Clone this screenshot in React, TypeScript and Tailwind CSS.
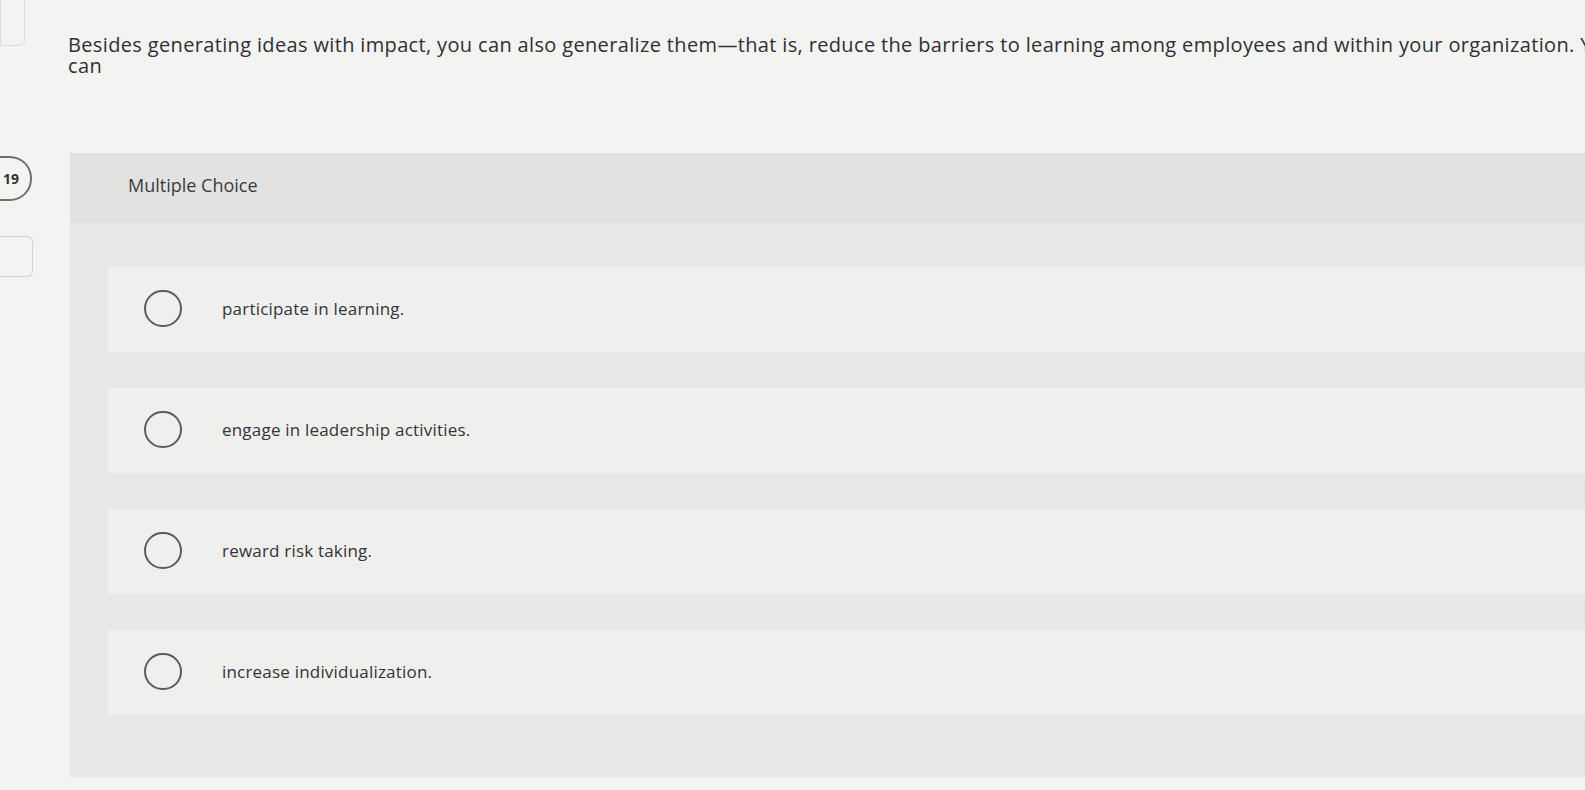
import React from "react";

const options = [
  "participate in learning.",
  "engage in leadership activities.",
  "reward risk taking.",
  "increase individualization.",
];

function Radio() {
  return (
    <div className="w-[38px] h-[37px] rounded-full border-2 border-[#5a5d60] shrink-0" />
  );
}

export default function App() {
  return (
    <div
      className="w-[1585px] h-[790px] overflow-hidden bg-[#f3f3f2] text-[#2f3033] relative"
      style={{ fontFamily: "'Open Sans', 'Noto Sans', sans-serif" }}
    >
      {/* faint top-left box */}
      <div className="absolute left-0 top-[-4px] w-[25px] h-[50px] border border-[#dcdcdc] rounded-r-md" />

      {/* question */}
      <div className="pl-[68px] pt-[35px] text-[20px] leading-[20px] whitespace-nowrap tracking-[0.35px]">
        <div>
          Besides generating ideas with impact, you can also generalize them—that is, reduce the barriers to learning among employees and within your organization. You
        </div>
        <div className="mt-[1px]">can</div>
      </div>

      <div className="flex mt-[77px]">
        {/* left column */}
        <div className="w-[70px] shrink-0 flex flex-col">
          <div className="w-[32px] h-[45px] mt-[3px] border-2 border-l-0 border-[#6e7073] rounded-r-[22px] flex items-center overflow-hidden">
            <span className="ml-[3px] text-[14px] font-bold text-[#333]">19</span>
          </div>
          <div className="w-[33px] h-[41px] mt-[35px] border border-l-0 border-[#d3d3d3] rounded-r-md" />
        </div>

        {/* card */}
        <div className="flex-1 bg-[#e7e7e6] h-[624px]">
          <div className="h-[70px] bg-[#e2e2e1] flex items-center pl-[58px] pb-[6px]">
            <span className="text-[18px] text-[#3a3b3e]">Multiple Choice</span>
          </div>
          <div className="flex flex-col gap-[36px] pt-[44px] pl-[38px]">
            {options.map((o) => (
              <div key={o} className="h-[85px] bg-[#efefee] flex items-center pl-[36px] pb-[2px]">
                <Radio />
                <span className="ml-[40px] text-[17px] tracking-[0.2px] text-[#333437]">{o}</span>
              </div>
            ))}
          </div>
        </div>
      </div>
    </div>
  );
}
